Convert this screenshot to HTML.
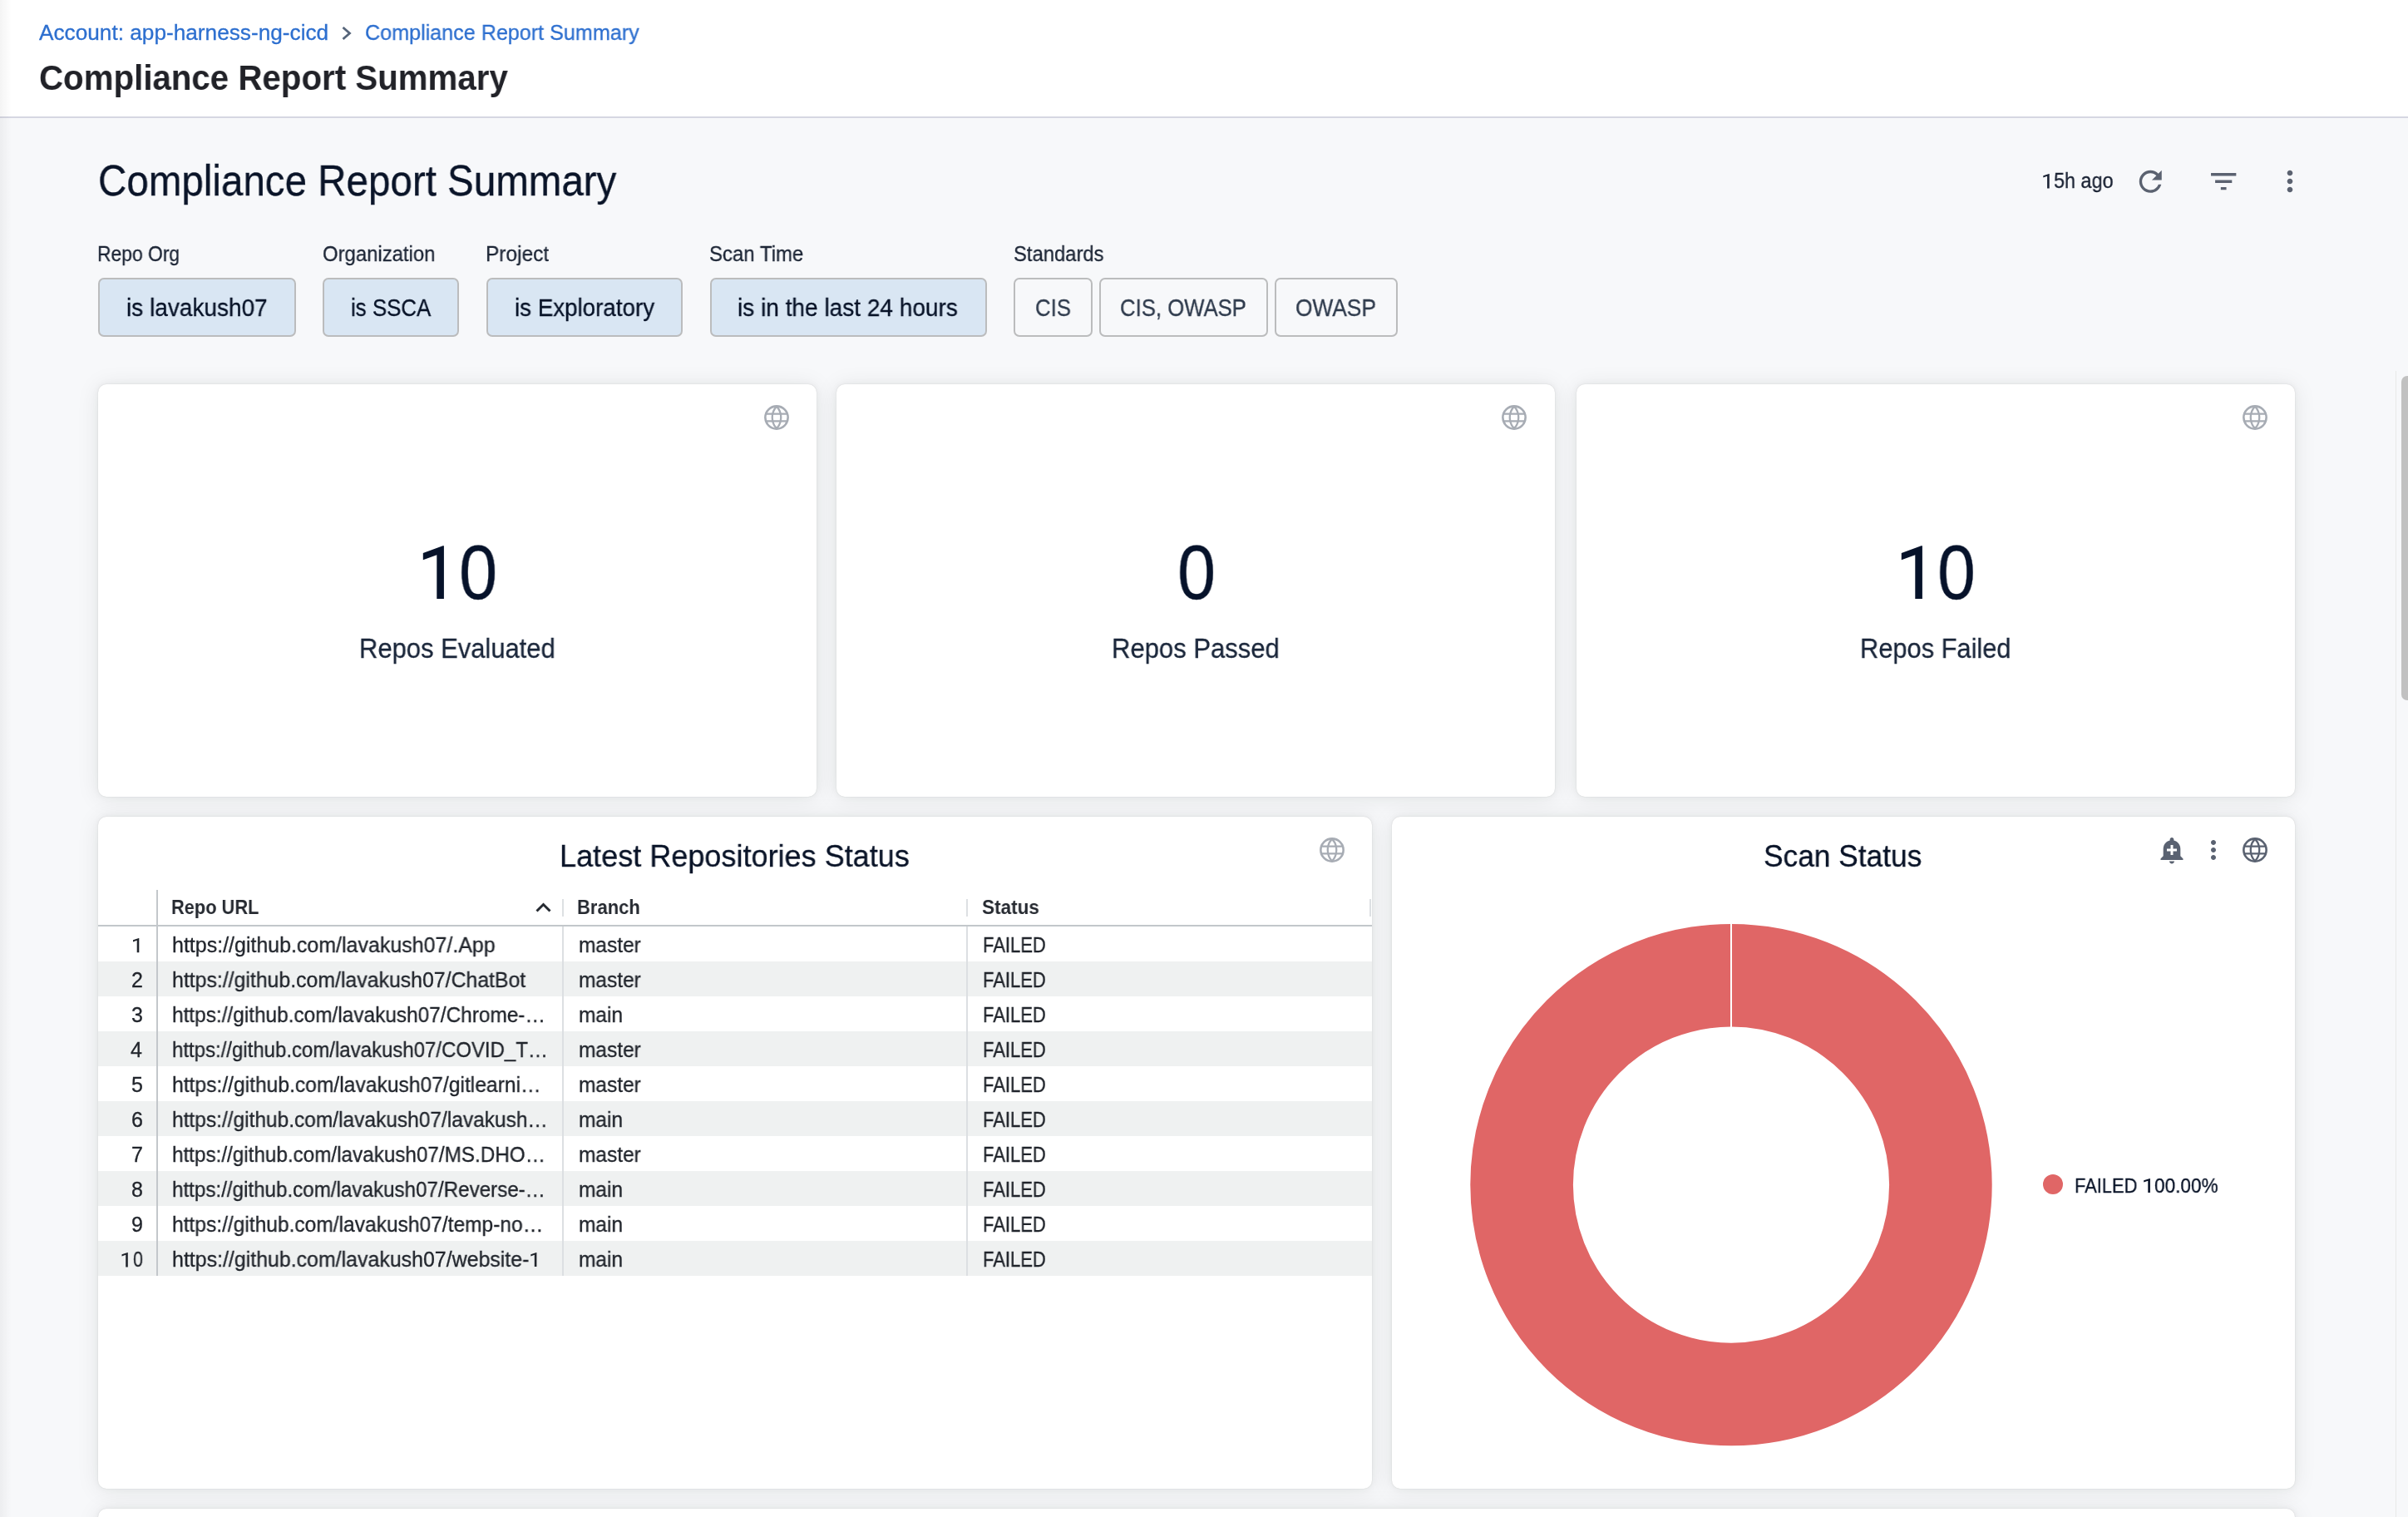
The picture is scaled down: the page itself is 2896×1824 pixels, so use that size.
<!DOCTYPE html>
<html><head><meta charset="utf-8"><title>Compliance Report Summary</title>
<style>
html,body{margin:0;padding:0;}
body{width:2896px;height:1824px;overflow:hidden;position:relative;background:#f7f8fa;font-family:"Liberation Sans",sans-serif;}
.t{position:absolute;white-space:nowrap;transform-origin:0 0;will-change:transform;-webkit-text-stroke:0.3px currentColor;font-family:"Liberation Sans",sans-serif;}
.a{position:absolute;}
</style></head><body>
<div class=a style="left:0;top:0;width:14px;height:1824px;background:linear-gradient(90deg,rgba(0,0,0,0.045),rgba(0,0,0,0));z-index:5"></div>
<div class=a style="left:0;top:0;width:2896px;height:140px;background:#fff"></div>
<div class=a style="left:0;top:140px;width:2896px;height:2px;background:#d6d7e2"></div>
<svg class=a style="left:405px;top:28px" width="24" height="24" viewBox="0 0 24 24"><polyline points="7.5,5 15.5,12 7.5,19" fill="none" stroke="#56657a" stroke-width="2.8"/></svg>
<svg class=a style="left:2566px;top:198px" width="40.5" height="40.5" viewBox="0 0 24 24"><path fill="#5b6270" d="M17.65 6.35C16.2 4.9 14.21 4 12 4c-4.42 0-7.99 3.58-7.99 8s3.57 8 7.99 8c3.73 0 6.84-2.55 7.73-6h-2.08c-.82 2.33-3.04 4-5.65 4-3.31 0-6-2.69-6-6s2.69-6 6-6c1.66 0 3.14.69 4.22 1.78L13 11h7V4l-2.35 2.35z"/></svg>
<svg class=a style="left:2654px;top:198px" width="40.4" height="40.4" viewBox="0 0 24 24"><path fill="#5b6270" d="M10 18h4v-2h-4v2zM3 6v2h18V6H3zm3 7h12v-2H6v2z"/></svg>
<svg class=a style="left:2734px;top:198px" width="40" height="40" viewBox="0 0 24 24"><path fill="#5b6270" d="M12 8c1.1 0 2-.9 2-2s-.9-2-2-2-2 .9-2 2 .9 2 2 2zm0 2c-1.1 0-2 .9-2 2s.9 2 2 2 2-.9 2-2-.9-2-2-2zm0 6c-1.1 0-2 .9-2 2s.9 2 2 2 2-.9 2-2-.9-2-2-2z"/></svg>
<div class=a style="left:118px;top:334px;width:238px;height:71px;box-sizing:border-box;border:2px solid #bbbcbd;border-radius:7px;background:#d9e6f3"></div>
<div class=a style="left:388px;top:334px;width:164px;height:71px;box-sizing:border-box;border:2px solid #bbbcbd;border-radius:7px;background:#d9e6f3"></div>
<div class=a style="left:585px;top:334px;width:236px;height:71px;box-sizing:border-box;border:2px solid #bbbcbd;border-radius:7px;background:#d9e6f3"></div>
<div class=a style="left:854px;top:334px;width:332.5999999999999px;height:71px;box-sizing:border-box;border:2px solid #bbbcbd;border-radius:7px;background:#d9e6f3"></div>
<div class=a style="left:1219px;top:334px;width:94.5px;height:71px;box-sizing:border-box;border:2px solid #bbbcbd;border-radius:7px;background:#f7f8fa"></div>
<div class=a style="left:1322px;top:334px;width:203px;height:71px;box-sizing:border-box;border:2px solid #bbbcbd;border-radius:7px;background:#f7f8fa"></div>
<div class=a style="left:1533px;top:334px;width:148px;height:71px;box-sizing:border-box;border:2px solid #bbbcbd;border-radius:7px;background:#f7f8fa"></div>
<div class=a style="left:118px;top:462px;width:864px;height:495.5px;background:#fff;border-radius:10px;box-shadow:0 0 1.5px rgba(0,0,0,0.13),0 0 8px rgba(10,30,20,0.05),0 2px 28px rgba(10,30,20,0.085)"></div>
<div class=a style="left:1006px;top:462px;width:863.5px;height:495.5px;background:#fff;border-radius:10px;box-shadow:0 0 1.5px rgba(0,0,0,0.13),0 0 8px rgba(10,30,20,0.05),0 2px 28px rgba(10,30,20,0.085)"></div>
<div class=a style="left:1895.5px;top:462px;width:864.5px;height:495.5px;background:#fff;border-radius:10px;box-shadow:0 0 1.5px rgba(0,0,0,0.13),0 0 8px rgba(10,30,20,0.05),0 2px 28px rgba(10,30,20,0.085)"></div>
<div class=a style="left:118px;top:982px;width:1532px;height:808px;background:#fff;border-radius:10px;box-shadow:0 0 1.5px rgba(0,0,0,0.13),0 0 8px rgba(10,30,20,0.05),0 2px 28px rgba(10,30,20,0.085)"></div>
<div class=a style="left:1674px;top:982px;width:1086px;height:808px;background:#fff;border-radius:10px;box-shadow:0 0 1.5px rgba(0,0,0,0.13),0 0 8px rgba(10,30,20,0.05),0 2px 28px rgba(10,30,20,0.085)"></div>
<div class=a style="left:118px;top:1814px;width:2642px;height:386px;background:#fff;border-radius:10px;box-shadow:0 0 1.5px rgba(0,0,0,0.13),0 0 8px rgba(10,30,20,0.05),0 2px 28px rgba(10,30,20,0.085)"></div>
<svg class=a style="left:918.5px;top:487.0px" width="30" height="30" viewBox="0 0 30 30"><g fill="none" stroke="#a7acb4"><circle cx="15" cy="15" r="13.65" stroke-width="2.6"/><path stroke-width="2.1" d="M1.5 10.6H28.5M1.5 19.4H28.5"/><path stroke-width="2.3" d="M15 1.6C11.6 5.2 9.75 8.8 9.75 15C9.75 21.2 11.6 24.8 15 28.4M15 1.6C18.4 5.2 20.25 8.8 20.25 15C20.25 21.2 18.4 24.8 15 28.4"/></g></svg>
<svg class=a style="left:1806.0px;top:487.0px" width="30" height="30" viewBox="0 0 30 30"><g fill="none" stroke="#a7acb4"><circle cx="15" cy="15" r="13.65" stroke-width="2.6"/><path stroke-width="2.1" d="M1.5 10.6H28.5M1.5 19.4H28.5"/><path stroke-width="2.3" d="M15 1.6C11.6 5.2 9.75 8.8 9.75 15C9.75 21.2 11.6 24.8 15 28.4M15 1.6C18.4 5.2 20.25 8.8 20.25 15C20.25 21.2 18.4 24.8 15 28.4"/></g></svg>
<svg class=a style="left:2697.0px;top:487.0px" width="30" height="30" viewBox="0 0 30 30"><g fill="none" stroke="#a7acb4"><circle cx="15" cy="15" r="13.65" stroke-width="2.6"/><path stroke-width="2.1" d="M1.5 10.6H28.5M1.5 19.4H28.5"/><path stroke-width="2.3" d="M15 1.6C11.6 5.2 9.75 8.8 9.75 15C9.75 21.2 11.6 24.8 15 28.4M15 1.6C18.4 5.2 20.25 8.8 20.25 15C20.25 21.2 18.4 24.8 15 28.4"/></g></svg>
<svg class=a style="left:1587.0px;top:1007.0px" width="30" height="30" viewBox="0 0 30 30"><g fill="none" stroke="#a7acb4"><circle cx="15" cy="15" r="13.65" stroke-width="2.6"/><path stroke-width="2.1" d="M1.5 10.6H28.5M1.5 19.4H28.5"/><path stroke-width="2.3" d="M15 1.6C11.6 5.2 9.75 8.8 9.75 15C9.75 21.2 11.6 24.8 15 28.4M15 1.6C18.4 5.2 20.25 8.8 20.25 15C20.25 21.2 18.4 24.8 15 28.4"/></g></svg>
<svg class=a style="left:2697.0px;top:1007.0px" width="30" height="30" viewBox="0 0 30 30"><g fill="none" stroke="#5a6271"><circle cx="15" cy="15" r="13.65" stroke-width="2.6"/><path stroke-width="2.1" d="M1.5 10.6H28.5M1.5 19.4H28.5"/><path stroke-width="2.3" d="M15 1.6C11.6 5.2 9.75 8.8 9.75 15C9.75 21.2 11.6 24.8 15 28.4M15 1.6C18.4 5.2 20.25 8.8 20.25 15C20.25 21.2 18.4 24.8 15 28.4"/></g></svg>
<svg class=a style="left:2594.0px;top:1004.0px" width="36" height="36" viewBox="0 0 24 24"><path fill="#5a6271" d="M10.01 21.01c0 1.1.89 1.99 1.99 1.99s1.99-.89 1.99-1.99h-3.98zm8.87-4.19V11c0-3.25-2.25-5.97-5.29-6.69v-.72C13.59 2.71 12.88 2 12 2s-1.59.71-1.59 1.59v.72C7.37 5.03 5.12 7.75 5.12 11v5.82L3 18.94V20h18v-1.06l-2.12-2.12zM16 13.01h-3v3h-2v-3H8V11h3V8h2v3h3v2.01z"/></svg>
<svg class=a style="left:2644px;top:1004px" width="36" height="36" viewBox="0 0 24 24"><path fill="#5a6271" d="M12 8c1.1 0 2-.9 2-2s-.9-2-2-2-2 .9-2 2 .9 2 2 2zm0 2c-1.1 0-2 .9-2 2s.9 2 2 2 2-.9 2-2-.9-2-2-2zm0 6c-1.1 0-2 .9-2 2s.9 2 2 2 2-.9 2-2-.9-2-2-2z"/></svg>
<div class=a style="left:118px;top:1156px;width:1532px;height:42px;background:#eff1f1"></div>
<div class=a style="left:118px;top:1240px;width:1532px;height:42px;background:#eff1f1"></div>
<div class=a style="left:118px;top:1324px;width:1532px;height:42px;background:#eff1f1"></div>
<div class=a style="left:118px;top:1408px;width:1532px;height:42px;background:#eff1f1"></div>
<div class=a style="left:118px;top:1492px;width:1532px;height:42px;background:#eff1f1"></div>
<div class=a style="left:118px;top:1112px;width:1532px;height:2px;background:#c2c7cb"></div>
<div class=a style="left:188px;top:1070px;width:2px;height:464px;background:#c3c7cb"></div>
<div class=a style="left:676px;top:1081px;width:2px;height:21px;background:#dde0e3"></div>
<div class=a style="left:676px;top:1114px;width:2px;height:420px;background:#dcdfe2"></div>
<div class=a style="left:1162px;top:1081px;width:2px;height:21px;background:#dde0e3"></div>
<div class=a style="left:1162px;top:1114px;width:2px;height:420px;background:#dcdfe2"></div>
<div class=a style="left:1647px;top:1081px;width:2px;height:21px;background:#dde0e3"></div>
<svg class=a style="left:640px;top:1080px" width="28" height="22" viewBox="0 0 28 22"><polyline points="5.5,15.5 13.5,7.5 21.5,15.5" fill="none" stroke="#252a31" stroke-width="3"/></svg>
<svg class=a style="left:1760px;top:1100px" width="650" height="650" viewBox="1760 1100 650 650"><circle cx="2082" cy="1424.6" r="251.9" fill="none" stroke="#e06666" stroke-width="123.6"/><rect x="2081" y="1105" width="2" height="134" fill="#fff"/></svg>
<div class=a style="left:2457px;top:1412px;width:24px;height:24px;border-radius:50%;background:#e06666"></div>
<div class=a style="left:2881px;top:446px;width:1px;height:1378px;background:#e8e8e8"></div>
<div class=a style="left:2888px;top:452px;width:14px;height:390px;border-radius:7px;background:#c1c1c1"></div>
<svg class=a style="left:500px;top:650px;z-index:2" width="40" height="75" viewBox="0 0 40 75"><polygon fill="#06122a" points="33.90,6.20 33.90,69.90 25.30,69.90 25.30,17.20 8.80,23.20 8.80,14.90 32.60,6.20"/></svg>
<svg class=a style="left:2278.2px;top:650px;z-index:2" width="40" height="75" viewBox="0 0 40 75"><polygon fill="#06122a" points="33.90,6.20 33.90,69.90 25.30,69.90 25.30,17.20 8.80,23.20 8.80,14.90 32.60,6.20"/></svg>
<svg class=a style="left:155px;top:1122.7px;z-index:2" width="40" height="30" viewBox="0 0 40 30"><polygon fill="#21252c" points="12.30,5.00 12.30,22.20 9.70,22.20 9.70,7.70 5.00,9.50 5.00,7.30 11.90,5.00"/></svg>
<svg class=a style="left:141px;top:1500.5px;z-index:2" width="40" height="30" viewBox="0 0 40 30"><polygon fill="#21252c" points="12.80,5.00 12.80,22.40 10.20,22.40 10.20,7.70 5.50,9.50 5.50,7.30 12.40,5.00"/></svg>
<svg class=a style="left:633px;top:1500.8px;z-index:2" width="40" height="30" viewBox="0 0 40 30"><polygon fill="#21252c" points="12.40,5.00 12.40,22.10 9.80,22.10 9.80,7.70 5.30,9.50 5.30,7.30 12.00,5.00"/></svg>
<svg class=a style="left:2573px;top:1411.9px;z-index:2" width="40" height="30" viewBox="0 0 40 30"><polygon fill="#0a1428" points="12.90,5.00 12.90,22.10 10.30,22.10 10.30,7.70 5.20,9.50 5.20,7.30 12.50,5.00"/></svg>
<svg class=a style="left:2452px;top:203.6px;z-index:2" width="40" height="30" viewBox="0 0 40 30"><polygon fill="#1a2233" points="12.70,5.00 12.70,22.50 10.10,22.50 10.10,7.70 5.30,9.50 5.30,7.30 12.30,5.00"/></svg>
<div class=t style="left:46.60px;top:21.90px;font-size:25.581px;line-height:34px;font-weight:400;color:#2d6fcf;letter-spacing:0.000px;transform:scaleX(1.0246)">Account: app-harness-ng-cicd</div>
<div class=t style="left:439.22px;top:22.10px;font-size:25.581px;line-height:34px;font-weight:400;color:#2d6fcf;letter-spacing:0.000px;transform:scaleX(0.9827)">Compliance Report Summary</div>
<div class=t style="left:46.56px;top:65.00px;font-size:42.733px;line-height:56px;font-weight:700;color:#212228;letter-spacing:0.000px;transform:scaleX(0.9425);-webkit-text-stroke:0">Compliance Report Summary</div>
<div class=t style="left:117.84px;top:183.70px;font-size:51.163px;line-height:67px;font-weight:400;color:#0a1428;letter-spacing:0.000px;transform:scaleX(0.9291)">Compliance Report Summary</div>
<div class=t style="left:2470.11px;top:200.10px;font-size:26.163px;line-height:35px;font-weight:400;color:#1a2233;letter-spacing:0.000px;transform:scaleX(0.8948)">5h ago</div>
<div class=t style="left:117.49px;top:289.20px;font-size:25.291px;line-height:33px;font-weight:400;color:#1d2636;letter-spacing:0.000px;transform:scaleX(0.9038)">Repo Org</div>
<div class=t style="left:387.56px;top:289.20px;font-size:25.291px;line-height:33px;font-weight:400;color:#1d2636;letter-spacing:0.000px;transform:scaleX(0.9449)">Organization</div>
<div class=t style="left:584.46px;top:289.20px;font-size:25.291px;line-height:33px;font-weight:400;color:#1d2636;letter-spacing:0.000px;transform:scaleX(0.9679)">Project</div>
<div class=t style="left:853.05px;top:289.20px;font-size:25.291px;line-height:33px;font-weight:400;color:#1d2636;letter-spacing:0.000px;transform:scaleX(0.9488)">Scan Time</div>
<div class=t style="left:1219.06px;top:289.20px;font-size:25.291px;line-height:33px;font-weight:400;color:#1d2636;letter-spacing:0.000px;transform:scaleX(0.9418)">Standards</div>
<div class=t style="left:152.02px;top:351.00px;font-size:28.653px;line-height:38px;font-weight:400;color:#071227;letter-spacing:0.000px;transform:scaleX(0.9778)">is lavakush07</div>
<div class=t style="left:421.70px;top:351.00px;font-size:28.653px;line-height:38px;font-weight:400;color:#071227;letter-spacing:0.000px;transform:scaleX(0.9030)">is SSCA</div>
<div class=t style="left:619.03px;top:351.00px;font-size:28.653px;line-height:38px;font-weight:400;color:#071227;letter-spacing:0.000px;transform:scaleX(0.9684)">is Exploratory</div>
<div class=t style="left:887.42px;top:351.00px;font-size:28.653px;line-height:38px;font-weight:400;color:#071227;letter-spacing:0.000px;transform:scaleX(0.9787)">is in the last 24 hours</div>
<div class=t style="left:1245.10px;top:351.00px;font-size:28.653px;line-height:38px;font-weight:400;color:#2f3b4d;letter-spacing:0.000px;transform:scaleX(0.8983)">CIS</div>
<div class=t style="left:1347.10px;top:351.00px;font-size:28.653px;line-height:38px;font-weight:400;color:#2f3b4d;letter-spacing:0.000px;transform:scaleX(0.8976)">CIS, OWASP</div>
<div class=t style="left:1558.08px;top:351.00px;font-size:28.653px;line-height:38px;font-weight:400;color:#2f3b4d;letter-spacing:0.000px;transform:scaleX(0.9183)">OWASP</div>
<div class=t style="left:551.70px;top:627.90px;font-size:92.297px;line-height:120px;font-weight:400;color:#06122a;letter-spacing:0.000px;transform:scaleX(0.9000)">0</div>
<div class=t style="left:1415.91px;top:627.90px;font-size:92.297px;line-height:120px;font-weight:400;color:#06122a;letter-spacing:0.000px;transform:scaleX(0.8978)">0</div>
<div class=t style="left:2330.12px;top:627.90px;font-size:92.297px;line-height:120px;font-weight:400;color:#06122a;letter-spacing:0.000px;transform:scaleX(0.8933)">0</div>
<div class=t style="left:431.95px;top:758.00px;font-size:33.430px;line-height:44px;font-weight:400;color:#1a263a;letter-spacing:0.000px;transform:scaleX(0.9260)">Repos Evaluated</div>
<div class=t style="left:1336.94px;top:758.00px;font-size:33.430px;line-height:44px;font-weight:400;color:#1a263a;letter-spacing:0.000px;transform:scaleX(0.9280)">Repos Passed</div>
<div class=t style="left:2236.96px;top:758.00px;font-size:33.430px;line-height:44px;font-weight:400;color:#1a263a;letter-spacing:0.000px;transform:scaleX(0.9217)">Repos Failed</div>
<div class=t style="left:672.99px;top:1005.00px;font-size:37.209px;line-height:49px;font-weight:400;color:#0a1428;letter-spacing:0.000px;transform:scaleX(0.9694)">Latest Repositories Status</div>
<div class=t style="left:2121.45px;top:1004.90px;font-size:37.209px;line-height:49px;font-weight:400;color:#0a1428;letter-spacing:0.000px;transform:scaleX(0.9486)">Scan Status</div>
<div class=t style="left:205.82px;top:1074.10px;font-size:24.709px;line-height:33px;font-weight:700;color:#262a31;letter-spacing:0.000px;transform:scaleX(0.8830);-webkit-text-stroke:0">Repo URL</div>
<div class=t style="left:694.31px;top:1074.10px;font-size:24.709px;line-height:33px;font-weight:700;color:#262a31;letter-spacing:0.000px;transform:scaleX(0.8906);-webkit-text-stroke:0">Branch</div>
<div class=t style="left:1180.90px;top:1074.10px;font-size:24.709px;line-height:33px;font-weight:700;color:#262a31;letter-spacing:0.000px;transform:scaleX(0.9114);-webkit-text-stroke:0">Status</div>
<div class=t style="left:2494.93px;top:1409.00px;font-size:24.709px;line-height:33px;font-weight:400;color:#0a1428;letter-spacing:0.000px;transform:scaleX(0.8864)">FAILED</div>
<div class=t style="left:2590.60px;top:1409.00px;font-size:24.709px;line-height:33px;font-weight:400;color:#0a1428;letter-spacing:0.000px;transform:scaleX(0.9155)">00.00%</div>
<div class=t style="left:207.30px;top:1119.90px;font-size:25.000px;line-height:33px;font-weight:400;color:#21252c;letter-spacing:0.000px;transform:scaleX(0.9987)">https://github.com/lavakush07/.App</div>
<div class=t style="left:696.22px;top:1119.90px;font-size:25.000px;line-height:33px;font-weight:400;color:#21252c;letter-spacing:0.000px;transform:scaleX(0.9790)">master</div>
<div class=t style="left:1181.84px;top:1119.90px;font-size:25.000px;line-height:33px;font-weight:400;color:#21252c;letter-spacing:0.000px;transform:scaleX(0.8798)">FAILED</div>
<div class=t style="left:207.31px;top:1161.90px;font-size:25.000px;line-height:33px;font-weight:400;color:#21252c;letter-spacing:0.000px;transform:scaleX(0.9935)">https://github.com/lavakush07/ChatBot</div>
<div class=t style="left:696.22px;top:1161.90px;font-size:25.000px;line-height:33px;font-weight:400;color:#21252c;letter-spacing:0.000px;transform:scaleX(0.9790)">master</div>
<div class=t style="left:1181.84px;top:1161.90px;font-size:25.000px;line-height:33px;font-weight:400;color:#21252c;letter-spacing:0.000px;transform:scaleX(0.8798)">FAILED</div>
<div class=t style="left:158.20px;top:1161.90px;font-size:25.000px;line-height:33px;font-weight:400;color:#21252c;letter-spacing:0.000px;transform:scaleX(1.0000)">2</div>
<div class=t style="left:207.32px;top:1203.90px;font-size:25.000px;line-height:33px;font-weight:400;color:#21252c;letter-spacing:0.000px;transform:scaleX(0.9758)">https://github.com/lavakush07/Chrome-…</div>
<div class=t style="left:696.22px;top:1203.90px;font-size:25.000px;line-height:33px;font-weight:400;color:#21252c;letter-spacing:0.000px;transform:scaleX(0.9790)">main</div>
<div class=t style="left:1181.84px;top:1203.90px;font-size:25.000px;line-height:33px;font-weight:400;color:#21252c;letter-spacing:0.000px;transform:scaleX(0.8798)">FAILED</div>
<div class=t style="left:158.20px;top:1203.90px;font-size:25.000px;line-height:33px;font-weight:400;color:#21252c;letter-spacing:0.000px;transform:scaleX(1.0000)">3</div>
<div class=t style="left:207.34px;top:1245.90px;font-size:25.000px;line-height:33px;font-weight:400;color:#21252c;letter-spacing:0.000px;transform:scaleX(0.9594)">https://github.com/lavakush07/COVID_T…</div>
<div class=t style="left:696.22px;top:1245.90px;font-size:25.000px;line-height:33px;font-weight:400;color:#21252c;letter-spacing:0.000px;transform:scaleX(0.9790)">master</div>
<div class=t style="left:1181.84px;top:1245.90px;font-size:25.000px;line-height:33px;font-weight:400;color:#21252c;letter-spacing:0.000px;transform:scaleX(0.8798)">FAILED</div>
<div class=t style="left:157.20px;top:1245.90px;font-size:25.000px;line-height:33px;font-weight:400;color:#21252c;letter-spacing:0.000px;transform:scaleX(1.0000)">4</div>
<div class=t style="left:207.31px;top:1287.90px;font-size:25.000px;line-height:33px;font-weight:400;color:#21252c;letter-spacing:0.000px;transform:scaleX(0.9853)">https://github.com/lavakush07/gitlearni…</div>
<div class=t style="left:696.22px;top:1287.90px;font-size:25.000px;line-height:33px;font-weight:400;color:#21252c;letter-spacing:0.000px;transform:scaleX(0.9790)">master</div>
<div class=t style="left:1181.84px;top:1287.90px;font-size:25.000px;line-height:33px;font-weight:400;color:#21252c;letter-spacing:0.000px;transform:scaleX(0.8798)">FAILED</div>
<div class=t style="left:158.20px;top:1287.90px;font-size:25.000px;line-height:33px;font-weight:400;color:#21252c;letter-spacing:0.000px;transform:scaleX(1.0000)">5</div>
<div class=t style="left:207.32px;top:1329.90px;font-size:25.000px;line-height:33px;font-weight:400;color:#21252c;letter-spacing:0.000px;transform:scaleX(0.9795)">https://github.com/lavakush07/lavakush…</div>
<div class=t style="left:696.22px;top:1329.90px;font-size:25.000px;line-height:33px;font-weight:400;color:#21252c;letter-spacing:0.000px;transform:scaleX(0.9790)">main</div>
<div class=t style="left:1181.84px;top:1329.90px;font-size:25.000px;line-height:33px;font-weight:400;color:#21252c;letter-spacing:0.000px;transform:scaleX(0.8798)">FAILED</div>
<div class=t style="left:158.20px;top:1329.90px;font-size:25.000px;line-height:33px;font-weight:400;color:#21252c;letter-spacing:0.000px;transform:scaleX(1.0000)">6</div>
<div class=t style="left:207.33px;top:1371.90px;font-size:25.000px;line-height:33px;font-weight:400;color:#21252c;letter-spacing:0.000px;transform:scaleX(0.9701)">https://github.com/lavakush07/MS.DHO…</div>
<div class=t style="left:696.22px;top:1371.90px;font-size:25.000px;line-height:33px;font-weight:400;color:#21252c;letter-spacing:0.000px;transform:scaleX(0.9790)">master</div>
<div class=t style="left:1181.84px;top:1371.90px;font-size:25.000px;line-height:33px;font-weight:400;color:#21252c;letter-spacing:0.000px;transform:scaleX(0.8798)">FAILED</div>
<div class=t style="left:158.20px;top:1371.90px;font-size:25.000px;line-height:33px;font-weight:400;color:#21252c;letter-spacing:0.000px;transform:scaleX(1.0000)">7</div>
<div class=t style="left:207.33px;top:1413.90px;font-size:25.000px;line-height:33px;font-weight:400;color:#21252c;letter-spacing:0.000px;transform:scaleX(0.9672)">https://github.com/lavakush07/Reverse-…</div>
<div class=t style="left:696.22px;top:1413.90px;font-size:25.000px;line-height:33px;font-weight:400;color:#21252c;letter-spacing:0.000px;transform:scaleX(0.9790)">main</div>
<div class=t style="left:1181.84px;top:1413.90px;font-size:25.000px;line-height:33px;font-weight:400;color:#21252c;letter-spacing:0.000px;transform:scaleX(0.8798)">FAILED</div>
<div class=t style="left:158.20px;top:1413.90px;font-size:25.000px;line-height:33px;font-weight:400;color:#21252c;letter-spacing:0.000px;transform:scaleX(1.0000)">8</div>
<div class=t style="left:207.32px;top:1455.90px;font-size:25.000px;line-height:33px;font-weight:400;color:#21252c;letter-spacing:0.000px;transform:scaleX(0.9820)">https://github.com/lavakush07/temp-no…</div>
<div class=t style="left:696.22px;top:1455.90px;font-size:25.000px;line-height:33px;font-weight:400;color:#21252c;letter-spacing:0.000px;transform:scaleX(0.9790)">main</div>
<div class=t style="left:1181.84px;top:1455.90px;font-size:25.000px;line-height:33px;font-weight:400;color:#21252c;letter-spacing:0.000px;transform:scaleX(0.8798)">FAILED</div>
<div class=t style="left:158.20px;top:1455.90px;font-size:25.000px;line-height:33px;font-weight:400;color:#21252c;letter-spacing:0.000px;transform:scaleX(1.0000)">9</div>
<div class=t style="left:207.30px;top:1497.90px;font-size:25.000px;line-height:33px;font-weight:400;color:#21252c;letter-spacing:0.000px;transform:scaleX(0.9968)">https://github.com/lavakush07/website-</div>
<div class=t style="left:696.22px;top:1497.90px;font-size:25.000px;line-height:33px;font-weight:400;color:#21252c;letter-spacing:0.000px;transform:scaleX(0.9790)">main</div>
<div class=t style="left:1181.84px;top:1497.90px;font-size:25.000px;line-height:33px;font-weight:400;color:#21252c;letter-spacing:0.000px;transform:scaleX(0.8798)">FAILED</div>
<div class=t style="left:159.60px;top:1497.90px;font-size:25.000px;line-height:33px;font-weight:400;color:#21252c;letter-spacing:0.000px;transform:scaleX(0.8615)">0</div>
</body></html>
